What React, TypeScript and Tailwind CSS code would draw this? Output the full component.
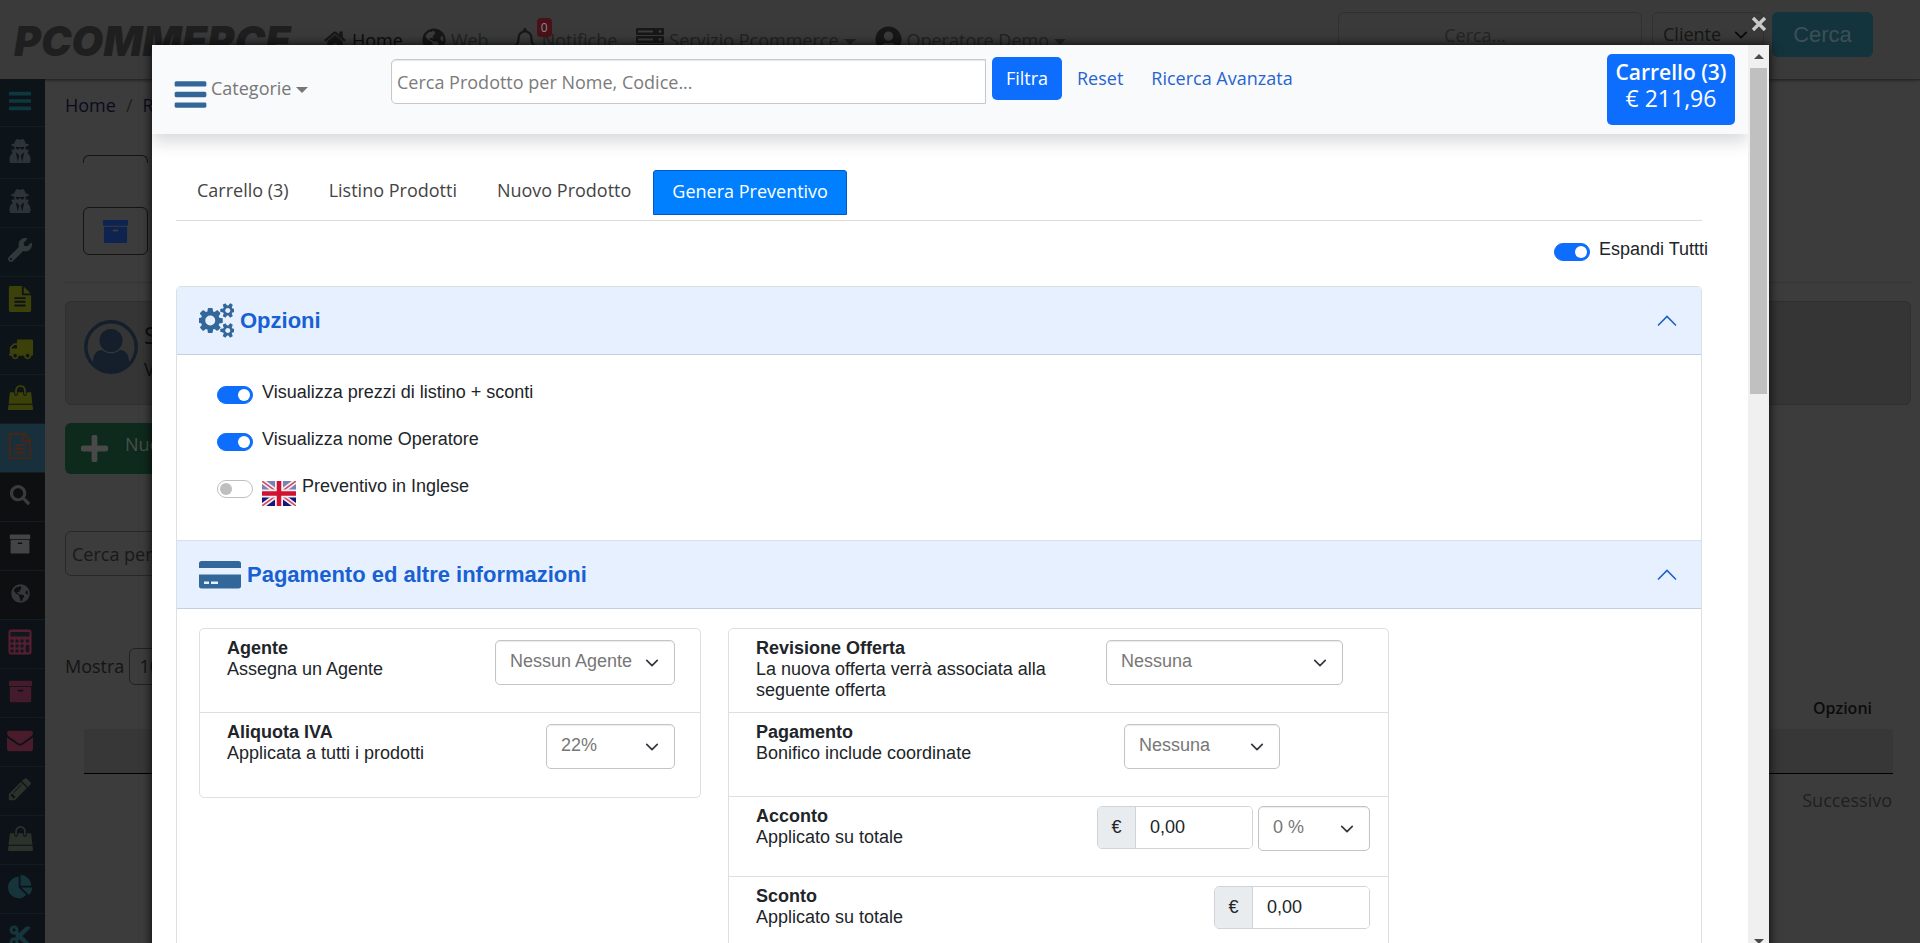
import React, { useState } from 'react';
import type { ReactNode } from 'react';
import { FaCut, FaGlobeAmericas, FaPlus, FaRegBell, FaSearch, FaUserCircle, FaUserSecret, FaWrench } from 'react-icons/fa';

const paths = {
  bars: 'M1664 1344v128q0 26-19 45t-45 19h-1408q-26 0-45-19t-19-45v-128q0-26 19-45t45-19h1408q26 0 45 19t19 45zm0-512v128q0 26-19 45t-45 19h-1408q-26 0-45-19t-19-45v-128q0-26 19-45t45-19h1408q26 0 45 19t19 45zm0-512v128q0 26-19 45t-45 19h-1408q-26 0-45-19t-19-45v-128q0-26 19-45t45-19h1408q26 0 45 19t19 45z',
  home: 'M1472 992v480q0 26-19 45t-45 19h-384v-384h-256v384h-384q-26 0-45-19t-19-45v-480q0-1 .5-3t.5-3l575-474 575 474q1 2 1 6zm223-69l-62 74q-8 9-21 11h-3q-13 0-21-7l-692-577-692 577q-12 8-24 7-13-2-21-11l-62-74q-8-10-7-23.5t11-21.5l719-599q32-26 76-26t76 26l244 204v-195q0-14 9-23t23-9h192q14 0 23 9t9 23v408l219 182q10 8 11 21.5t-7 23.5z',
  cogs: 'M832 896q0-106-75-181t-181-75-181 75-75 181 75 181 181 75 181-75 75-181zm768 512q0-52-38-90t-90-38-90 38-38 90q0 53 37.5 90.5t90.5 37.5 90.5-37.5 37.5-90.5zm0-1024q0-52-38-90t-90-38-90 38-38 90q0 53 37.5 90.5t90.5 37.5 90.5-37.5 37.5-90.5zm-384 421v185q0 10-7 19.5t-16 10.5l-155 24q-11 35-32 76 34 48 90 115 7 11 7 20 0 12-7 19-23 30-82.5 89.5t-78.5 59.5q-11 0-21-7l-115-90q-37 19-77 31-11 108-23 155-7 24-30 24h-186q-11 0-20-7.5t-10-17.5l-23-153q-34-10-75-31l-118 89q-7 7-20 7-11 0-21-8-144-133-144-160 0-9 7-19 10-14 41-53t47-61q-23-44-35-82l-152-24q-10-1-17-9.5t-7-19.5v-185q0-10 7-19.5t16-10.5l155-24q11-35 32-76-34-48-90-115-7-11-7-20 0-12 7-20 22-30 82-89t79-59q11 0 21 7l115 90q34-18 77-32 11-108 23-154 7-24 30-24h186q11 0 20 7.5t10 17.5l23 153q34 10 75 31l118-89q8-7 20-7 11 0 21 8 144 133 144 160 0 8-7 19-12 16-42 54t-45 60q23 48 34 82l152 23q10 2 17 10.5t7 19.5zm640 533v140q0 16-149 31-12 27-30 52 51 113 51 138 0 4-4 7-122 71-124 71-8 0-46-47t-52-68q-20 2-30 2t-30-2q-14 21-52 68t-46 47q-2 0-124-71-4-3-4-7 0-25 51-138-18-25-30-52-149-15-149-31v-140q0-16 149-31 13-29 30-52-51-113-51-138 0-4 4-7 4-2 35-20t59-34 30-16q8 0 46 46.5t52 67.5q20-2 30-2t30 2q51-71 92-112l6-2q4 0 124 70 4 3 4 7 0 25-51 138 17 23 30 52 149 15 149 31zm0-1024v140q0 16-149 31-12 27-30 52 51 113 51 138 0 4-4 7-122 71-124 71-8 0-46-47t-52-68q-20 2-30 2t-30-2q-14 21-52 68t-46 47q-2 0-124-71-4-3-4-7 0-25 51-138-18-25-30-52-149-15-149-31v-140q0-16 149-31 13-29 30-52-51-113-51-138 0-4 4-7 4-2 35-20t59-34 30-16q8 0 46 46.5t52 67.5q20-2 30-2t30 2q51-71 92-112l6-2q4 0 124 70 4 3 4 7 0 25-51 138 17 23 30 52 149 15 149 31z',
  truck: 'M640 1408q0-52-38-90t-90-38-90 38-38 90 38 90 90 38 90-38 38-90zm-384-512h384v-256h-158q-13 0-22 9l-195 195q-9 9-9 22v30zm1280 512q0-52-38-90t-90-38-90 38-38 90 38 90 90 38 90-38 38-90zm256-1088v1024q0 15-4 26.5t-13.5 18.5-16.5 11.5-23.5 6-22.5 2-25.5 0-22.5-.5q0 106-75 181t-181 75-181-75-75-181h-384q0 106-75 181t-181 75-181-75-75-181h-64q-3 0-22.5.5t-25.5 0-22.5-2-23.5-6-16.5-11.5-13.5-18.5-4-26.5q0-26 19-45t45-19v-320q0-8-.5-35t0-38 2.5-34.5 6.5-37 14-30.5 22.5-30l198-198q19-19 50.5-32t58.5-13h160v-192q0-26 19-45t45-19h1024q26 0 45 19t19 45z',
  file: 'M1596 476q14 14 28 36h-472v-472q22 14 36 28zm-476 164h544v1056q0 40-28 68t-68 28h-1344q-40 0-68-28t-28-68v-1600q0-40 28-68t68-28h800v544q0 40 28 68t68 28zm160 736v-64q0-14-9-23t-23-9h-704q-14 0-23 9t-9 23v64q0 14 9 23t23 9h704q14 0 23-9t9-23zm0-256v-64q0-14-9-23t-23-9h-704q-14 0-23 9t-9 23v64q0 14 9 23t23 9h704q14 0 23-9t9-23zm0-256v-64q0-14-9-23t-23-9h-704q-14 0-23 9t-9 23v64q0 14 9 23t23 9h704q14 0 23-9t9-23z',
  fileOutline: 'M1596 380q28 28 48 76t20 88v1152q0 40-28 68t-68 28h-1344q-40 0-68-28t-28-68v-1600q0-40 28-68t68-28h896q40 0 88 20t76 48zm-444-244v376h376q-10-29-22-41l-313-313q-12-12-41-22zm384 1528v-1024h-416q-40 0-68-28t-28-68v-416h-768v1536h1280zm-1024-864q0-14 9-23t23-9h704q14 0 23 9t9 23v64q0 14-9 23t-23 9h-704q-14 0-23-9t-9-23v-64zm736 224q14 0 23 9t9 23v64q0 14-9 23t-23 9h-704q-14 0-23-9t-9-23v-64q0-14 9-23t23-9h704zm0 256q14 0 23 9t9 23v64q0 14-9 23t-23 9h-704q-14 0-23-9t-9-23v-64q0-14 9-23t23-9h704z',
  archive: 'M1088 832q0-26-19-45t-45-19h-256q-26 0-45 19t-19 45 19 45 45 19h256q26 0 45-19t19-45zm576-192v960q0 26-19 45t-45 19h-1408q-26 0-45-19t-19-45v-960q0-26 19-45t45-19h1408q26 0 45 19t19 45zm64-448v256q0 26-19 45t-45 19h-1536q-26 0-45-19t-19-45v-256q0-26 19-45t45-19h1536q26 0 45 19t19 45z',
  bag: 'M1757 1408l35 313q3 28-16 50-19 21-48 21h-1664q-29 0-48-21-19-22-16-50l35-313h1722zm-93-839l86 775h-1708l86-775q3-24 21-40.5t43-16.5h256v128q0 53 37.5 90.5t90.5 37.5 90.5-37.5 37.5-90.5v-128h384v128q0 53 37.5 90.5t90.5 37.5 90.5-37.5 37.5-90.5v-128h256q25 0 43 16.5t21 40.5zm-384-185v256q0 26-19 45t-45 19-45-19-19-45v-256q0-106-75-181t-181-75-181 75-75 181v256q0 26-19 45t-45 19-45-19-19-45v-256q0-159 112.5-271.5t271.5-112.5 271.5 112.5 112.5 271.5z',
  envelope: 'M1792 710v794q0 66-47 113t-113 47h-1472q-66 0-113-47t-47-113v-794q44 49 101 87 362 246 497 345 57 42 92.5 65.5t94.5 48 110 24.5h2q51 0 110-24.5t94.5-48 92.5-65.5q170-123 498-345 57-39 100-87zm0-294q0 79-49 151t-122 123q-376 261-468 325-10 7-42.5 31t-54 38.5-52 32.5-57.5 27-50 9h-2q-23 0-50-9t-57.5-27-52-32.5-54-38.5-42.5-31q-91-64-262-182.5t-205-142.5q-62-42-117-115.5t-55-136.5q0-78 41.5-130t118.5-52h1472q65 0 112.5 47t47.5 113z',
  pencil: 'M491 1536l91-91-235-235-91 91v107h128v128h107zm523-928q0-22-22-22-10 0-17 7l-542 542q-7 7-7 17 0 22 22 22 10 0 17-7l542-542q7-7 7-17zm-54-192l416 416-832 832h-416v-416zm683 96q0 53-37 90l-166 166-416-416 166-165q36-38 90-38 53 0 91 38l235 234q37 39 37 91z',
  pie: 'M768 890l546 546q-106 108-247.5 168t-298.5 60q-209 0-385.5-103t-279.5-279.5-103-385.5 103-385.5 279.5-279.5 385.5-103v762zm187 6h773q0 157-60 298.5t-168 247.5zm709-128h-768v-768q209 0 385.5 103t279.5 279.5 103 385.5z',
};

function Glyph({ name, className }: { name: keyof typeof paths; className: string }) {
  return (
    <svg viewBox="0 0 1792 1792" fill="currentColor" aria-hidden="true" className={className}>
      <path d={paths[name]} />
    </svg>
  );
}

function Calculator() {
  const dots = [6, 11, 16].flatMap((y) => [4, 9, 14].map((x) => [x, y + 6]));
  return (
    <svg viewBox="0 0 24 26" className="h-[26px] w-6" aria-hidden="true">
      <rect x="1" y="1" width="22" height="24" rx="1.5" fill="#511f2f" stroke="#611f33" strokeWidth="1" />
      <rect x="2.5" y="3" width="19" height="4.5" fill="#10171d" />
      {dots.map(([x, y]) => (
        <circle key={`${x}-${y}`} cx={x} cy={y} r="1.7" fill="#10171d" />
      ))}
      <circle cx="19.5" cy="12" r="1.7" fill="#10171d" />
      <rect x="17.8" y="15.5" width="3.4" height="8" rx="1.7" fill="#10171d" />
    </svg>
  );
}

function Server() {
  return (
    <svg viewBox="0 0 28 24" className="h-6 w-7" aria-hidden="true">
      {[0, 8, 16].map((y) => (
        <g key={y}>
          <rect x="0" y={y} width="28" height="7" rx="1" fill="#171717" />
          <rect x="2" y={y + 2.5} width="15" height="2" fill="#3c3c3c" />
          <circle cx="24" cy={y + 3.5} r="1.4" fill="#3c3c3c" />
        </g>
      ))}
    </svg>
  );
}

function Avatar() {
  return (
    <svg viewBox="0 0 54 54" className="size-[54px]" aria-hidden="true">
      <circle cx="27" cy="27" r="25.2" fill="none" stroke="#141f2b" strokeWidth="3.4" />
      <circle cx="27" cy="20.5" r="11.5" fill="#141f2b" />
      <path d="M9 42c0-8 4-12 9-12 3 2 5.500 3.500 9 3.500s6-1.500 9-3.500c5 0 9 4 9 12-4 6-10 10-18 10S13 48 9 42z" fill="#141f2b" />
    </svg>
  );
}

function Flag() {
  return (
    <svg viewBox="0 0 34 25" className="h-[25px] w-[34px]" aria-hidden="true">
      <rect width="34" height="25" fill="#15157a" />
      <rect width="34" height="9" fill="#7a80b8" />
      <path d="M0 0 34 25M34 0 0 25" stroke="#f3eef3" strokeWidth="5" />
      <path d="M0 0 34 25M34 0 0 25" stroke="#d04a5c" strokeWidth="1.500" />
      <path d="M17 0v25M0 12.500h34" stroke="#f3eef3" strokeWidth="8" />
      <path d="M17 0v25M0 12.500h34" stroke="#cf1230" strokeWidth="4.500" />
    </svg>
  );
}

function CreditCard() {
  return (
    <svg viewBox="0 0 42 28" className="h-7 w-[42px]" fill="#346799" aria-hidden="true">
      <path d="M2.500 0h37A2.500 2.500 0 0 1 42 2.500V7H0V2.500A2.500 2.500 0 0 1 2.500 0z" />
      <path fillRule="evenodd" d="M0 13.500h42v11.500a2.500 2.500 0 0 1-2.500 2.500h-37A2.500 2.500 0 0 1 0 25zM5 20.500v2.500h5v-2.500zM12 20.500v2.500h7v-2.500z" />
    </svg>
  );
}

function Chevron({ className }: { className: string }) {
  return (
    <svg viewBox="0 0 16 16" fill="none" stroke="currentColor" strokeLinecap="round" strokeLinejoin="round" aria-hidden="true" className={className}>
      <path d="m2 5 6 6 6-6" strokeWidth="2" />
    </svg>
  );
}

function Caret() {
  return <span className="ml-[5px] inline-block border-x-[6px] border-t-[6px] border-x-transparent border-t-current align-middle" />;
}

const sideItems: { label: string; icon: ReactNode; tone: string }[] = [
  { label: 'Menu', icon: <Glyph name="bars" className="size-[26px] text-[#0e383f]" />, tone: 'h-12 bg-[#0c1319]' },
  { label: 'Agenti', icon: <FaUserSecret className="size-6 text-[#2e3338]" />, tone: 'h-[52px] bg-[#0c1319]' },
  { label: 'Operatori', icon: <FaUserSecret className="size-6 text-[#2e3338]" />, tone: 'h-[49px] bg-[#0c1319]' },
  { label: 'Strumenti', icon: <FaWrench className="size-6 -scale-x-100 rotate-90 text-[#33383b]" />, tone: 'h-[49px] bg-[#0c1319]' },
  { label: 'Fatture', icon: <Glyph name="file" className="size-[26px] text-[#3c4009]" />, tone: 'h-[49px] bg-[#0c1319]' },
  { label: 'Spedizioni', icon: <Glyph name="truck" className="size-[25px] text-[#3c4009]" />, tone: 'h-[49px] bg-[#0c1319]' },
  { label: 'Ordini', icon: <Glyph name="bag" className="size-[25px] text-[#3c4009]" />, tone: 'h-[49px] bg-[#0c1319]' },
  { label: 'Preventivi', icon: <Glyph name="fileOutline" className="size-[26px] text-[#4b2415]" />, tone: 'h-[49px] bg-[#18303b]' },
  { label: 'Cerca', icon: <FaSearch className="size-5 text-[#3b3b3d]" />, tone: 'h-[49px] bg-[#0d0f11]' },
  { label: 'Archivio', icon: <Glyph name="archive" className="size-[22px] text-[#444]" />, tone: 'h-[49px] bg-[#0d0f11]' },
  { label: 'Sito', icon: <FaGlobeAmericas className="size-[19px] text-[#34363a]" />, tone: 'h-[49px] bg-[#0d0f11]' },
  { label: 'Calcolatrice', icon: <Calculator />, tone: 'h-[49px] bg-[#0c1217]' },
  { label: 'Magazzino', icon: <Glyph name="archive" className="size-[25px] text-[#431b2a]" />, tone: 'h-[49px] bg-[#0c1217]' },
  { label: 'Messaggi', icon: <Glyph name="envelope" className="size-[26px] text-[#4a1b2a]" />, tone: 'h-[49px] bg-[#0c1217]' },
  { label: 'Modifica', icon: <Glyph name="pencil" className="size-[26px] text-[#2b322b]" />, tone: 'h-[49px] bg-[#0c1217]' },
  { label: 'Acquisti', icon: <Glyph name="bag" className="size-[25px] text-[#2b322b]" />, tone: 'h-[49px] bg-[#0c1217]' },
  { label: 'Statistiche', icon: <Glyph name="pie" className="size-[25px] text-[#15343b]" />, tone: 'h-[49px] bg-[#0c1217]' },
  { label: 'Taglia', icon: <FaCut className="size-6 text-[#15343b]" />, tone: 'h-[49px] bg-[#0c1217]' },
];

function NavLink({ icon, children, tone }: { icon: ReactNode; children: ReactNode; tone: string }) {
  return (
    <a href="#" className={`flex items-center gap-[5px] whitespace-nowrap ${tone}`}>
      <span className="text-[#171717]">{icon}</span>
      <span>{children}</span>
    </a>
  );
}

function TopBar() {
  return (
    <header className="flex h-[79px] items-start bg-[#3a3a3a] pl-[14px] shadow-[0_1px_3px_#1c1c1c]">
      <a href="#" className="mt-[22px] w-[309px] shrink-0 font-['Inter'] text-[41px] leading-[38px] font-black text-[#1f1f1f] italic">
        PCOMMERCE
      </a>
      <nav className="mt-[26px] flex items-center gap-[19px] leading-6">
        <NavLink icon={<Glyph name="home" className="size-6" />} tone="text-[#0c0c0c]">Home</NavLink>
        <NavLink icon={<FaGlobeAmericas className="size-6" />} tone="text-[#222]">Web</NavLink>
        <span className="relative ml-[5px]">
          <NavLink icon={<FaRegBell className="size-6" />} tone="text-[#222]">Notifiche</NavLink>
          <span className="absolute -top-[10px] left-6 rounded-sm bg-[#4a1118] px-1 text-[12px] leading-[19px] text-[#8a8a8a]">0</span>
        </span>
        <NavLink icon={<Server />} tone="text-[#222]">Servizio Pcommerce<Caret /></NavLink>
        <NavLink icon={<FaUserCircle className="size-[27px]" />} tone="text-[#222]">Operatore Demo<Caret /></NavLink>
      </nav>
      <form className="mt-3 mr-[47px] ml-auto flex gap-2">
        <input aria-label="Cerca nel gestionale" placeholder="Cerca..." className="h-[45px] w-[304px] rounded-md border border-[#303030] bg-transparent pr-[30px] text-center placeholder:text-[#252525]" />
        <span className="relative ml-[2px] block">
          <select aria-label="Tipo di ricerca" className="h-[45px] w-[112px] appearance-none rounded-md border border-[#303030] bg-transparent pl-[10px] text-[#161616]">
            <option>Cliente</option>
          </select>
          <Chevron className="pointer-events-none absolute top-4 right-4 size-[14px] text-[#0a0a0a]" />
        </span>
        <button type="button" className="h-[45px] w-[101px] rounded-md bg-[#13333d] font-['Liberation_Sans'] text-[22px] text-[#3d4f55]">Cerca</button>
      </form>
    </header>
  );
}

function BackPage() {
  return (
    <div className="flex h-full flex-col bg-[#3c3c3c]">
      <TopBar />
      <div className="flex min-h-0 flex-1">
        <aside className="w-[45px] shrink-0 overflow-hidden">
          {sideItems.map((item) => (
            <a key={item.label} href="#" aria-label={item.label} className={`flex items-center justify-center border-b border-[#141b21] pr-[5px] pb-[4px] ${item.tone}`}>
              {item.icon}
            </a>
          ))}
        </aside>
        <main className="min-w-0 flex-1 pl-5">
          <p className="flex h-[76px] gap-[10px] pt-[13px] leading-[26px] text-[#0b0b1c]">
            <a href="#">Home</a>
            <span className="text-[#1e1e1e]">/</span>
            <a href="#">Rubrica</a>
          </p>
          <div className="ml-[18px] h-2 w-[65px] rounded-t-md border border-b-0 border-[#141414]" />
          <button type="button" aria-label="Archivia" className="mt-[44px] ml-[18px] flex h-12 w-[65px] items-center justify-center rounded-md border border-[#141414]">
            <Glyph name="archive" className="size-[27px] text-[#0e2350]" />
          </button>
          <hr className="mt-[27px] mr-2 border-[#353535]" />
          <section className="mt-[18px] mr-[9px] flex h-[104px] items-center gap-[6px] rounded-md border border-[#2f2f2f] bg-[#353535] pb-3 pl-[18px]">
            <Avatar />
            <div className="text-[#0e0e0e]">
              <h2 className="pt-1 text-[24px] leading-9">Spett.le</h2>
              <p className="pt-1 leading-6">Via</p>
            </div>
          </section>
          <button type="button" className="mt-[18px] flex h-[51px] w-[240px] items-center gap-[15px] rounded-md bg-[#0e2a1d] pl-[14px] text-[#4a4f4c]">
            <FaPlus className="size-[31px] text-[#494949]" />
            <span className="pb-2">Nuovo Preventivo</span>
          </button>
          <input aria-label="Cerca preventivo" placeholder="Cerca per nome" className="mt-[57px] block h-[45px] w-[400px] rounded-md border border-[#282828] bg-transparent px-[6px] placeholder:text-[#191919]" />
          <label className="mt-[72px] flex h-[37px] items-center gap-[5px] text-[#141414]">
            Mostra
            <select className="h-[37px] w-20 appearance-none rounded-md border border-[#222] bg-transparent px-[9px]">
              <option>10</option>
            </select>
          </label>
          <table className="mt-[10px] ml-[19px] w-[calc(100%-46px)] text-[16px] text-[#0c0c0c]">
            <thead>
              <tr className="h-[34px]"><th className="pr-[21px] pb-[9px] text-right font-semibold">Opzioni</th></tr>
            </thead>
            <tbody>
              <tr className="h-11 border-b border-black bg-[#373737]"><td /></tr>
            </tbody>
          </table>
          <p className="mt-[13px] mr-[28px] text-right leading-[26px]"><a href="#" className="text-[#1f1f1f]">Successivo</a></p>
        </main>
      </div>
    </div>
  );
}

function Toggle({ id, on = false, children, flag = false }: { id: string; on?: boolean; children: ReactNode; flag?: boolean }) {
  return (
    <div className="flex h-[27px] gap-[9px] font-['Liberation_Sans'] text-[#212529]">
      <input
        id={id}
        type="checkbox"
        role="switch"
        defaultChecked={on}
        className="mt-[7px] h-[18px] w-9 shrink-0 appearance-none rounded-full border border-[#bfbfbf] bg-white before:m-[2px] before:block before:size-3 before:rounded-full before:bg-[#bfbfbf] before:content-[''] checked:border-[#0d6efd] checked:bg-[#0d6efd] checked:before:ml-5 checked:before:bg-white"
      />
      <label htmlFor={id} className="flex gap-[6px] leading-[27px]">
        {flag && <span className="pt-2"><Flag /></span>}
        {children}
      </label>
    </div>
  );
}

function Select({ id, value, width, label }: { id: string; value: string; width: string; label?: string }) {
  return (
    <span className={`relative block ${width}`}>
      <select id={id} aria-label={label} className="h-[45px] w-full appearance-none rounded-[5px] border border-[#c4c4c4] bg-white pr-9 pb-[3px] pl-[14px] text-[#777] shadow-[inset_0_1px_1px_rgba(0,0,0,0.08)]">
        <option>{value}</option>
      </select>
      <Chevron className="pointer-events-none absolute top-4 right-4 size-[14px] text-[#343a40]" />
    </span>
  );
}

function Money({ id }: { id: string }) {
  return (
    <span className="flex h-[43px] w-[156px] overflow-hidden rounded-[5px] border border-[#ced4da]">
      <span className="flex w-[38px] shrink-0 items-center justify-center border-r border-[#ced4da] bg-[#e9ecef] text-[#212529]">€</span>
      <input id={id} defaultValue="0,00" className="w-full min-w-0 bg-white px-[14px] text-[#212529]" />
    </span>
  );
}

function Row({ id, title, note, height, children, pad }: { id: string; title: string; note: string; height: string; pad: string; children: ReactNode }) {
  return (
    <div className={`flex justify-between border-b border-[#dfdfdf] pt-[9px] pl-[27px] last:border-b-0 ${height} ${pad}`}>
      <label htmlFor={id} className="w-[300px] leading-[21px]">
        <strong className="block">{title}</strong>
        {note}
      </label>
      {children}
    </div>
  );
}

function Panel({ id, icon, title, children }: { id: string; icon: ReactNode; title: string; children: ReactNode }) {
  const [open, setOpen] = useState(true);
  return (
    <section className="border border-b-0 border-[#dcdfe4] first:rounded-t-[5px]">
      <h2>
        <button
          type="button"
          aria-expanded={open}
          aria-controls={id}
          onClick={() => setOpen(!open)}
          className="flex h-[68px] w-full items-center gap-[6px] border-b border-[#c6cfdf] bg-[#e7f0ff] pr-[24px] pl-[22px] font-['Liberation_Sans'] text-[22px] font-bold text-[#1761d2]"
        >
          {icon}
          {title}
          <svg viewBox="0 0 20 12" className="ml-auto h-3 w-5" fill="none" stroke="#1d62c8" strokeWidth="1.6" aria-hidden="true">
            <path d="m1 10.500 9-9 9 9" />
          </svg>
        </button>
      </h2>
      {open && <div id={id}>{children}</div>}
    </section>
  );
}

function Quote() {
  return (
    <div className="mt-[23px] mr-[46px] ml-6">
      <Panel id="opzioni" title="Opzioni" icon={<Glyph name="cogs" className="size-[35px] text-[#346799]" />}>
        <div className="flex h-[185px] flex-col gap-5 pt-6 pl-10">
          <Toggle id="listino" on>Visualizza prezzi di listino + sconti</Toggle>
          <Toggle id="operatore" on>Visualizza nome Operatore</Toggle>
          <Toggle id="inglese" flag>Preventivo in Inglese</Toggle>
        </div>
      </Panel>
      <Panel id="pagamento" title="Pagamento ed altre informazioni" icon={<CreditCard />}>
        <div className="flex items-start gap-[27px] px-[22px] pt-[19px] pb-10 font-['Liberation_Sans'] text-[#212529]">
          <div className="w-[502px] rounded-[5px] border border-[#dfdfdf]">
            <Row id="agente" title="Agente" note="Assegna un Agente" height="h-[84px]" pad="pr-[25px]">
              <span className="pt-[2px]"><Select id="agente" value="Nessun Agente" width="w-[180px]" /></span>
            </Row>
            <Row id="iva" title="Aliquota IVA" note="Applicata a tutti i prodotti" height="h-[84px]" pad="pr-[25px]">
              <span className="pt-[2px]"><Select id="iva" value="22%" width="w-[129px]" /></span>
            </Row>
          </div>
          <div className="w-[661px] rounded-[5px] border border-[#dfdfdf]">
            <Row id="revisione" title="Revisione Offerta" note="La nuova offerta verrà associata alla seguente offerta" height="h-[84px]" pad="pr-[45px]">
              <span className="pt-[2px]"><Select id="revisione" value="Nessuna" width="w-[237px]" /></span>
            </Row>
            <Row id="metodo" title="Pagamento" note="Bonifico include coordinate" height="h-[84px]" pad="pr-[108px]">
              <span className="pt-[2px]"><Select id="metodo" value="Nessuna" width="w-[156px]" /></span>
            </Row>
            <Row id="acconto" title="Acconto" note="Applicato su totale" height="h-20" pad="pr-[18px]">
              <span className="flex gap-[5px]">
                <Money id="acconto" />
                <Select id="acconto-percento" label="Percentuale acconto" value="0 %" width="w-[112px]" />
              </span>
            </Row>
            <Row id="sconto" title="Sconto" note="Applicato su totale" height="h-20" pad="pr-[18px]">
              <Money id="sconto" />
            </Row>
          </div>
        </div>
      </Panel>
    </div>
  );
}

function Tabs() {
  const tabs = ['Carrello (3)', 'Listino Prodotti', 'Nuovo Prodotto', 'Genera Preventivo'];
  const [active, setActive] = useState(3);
  return (
    <div role="tablist" className="mt-[36px] mr-[46px] ml-6 flex h-[51px] border-b border-[#dcdcdc] pl-px">
      {tabs.map((tab, i) => (
        <button
          key={tab}
          type="button"
          role="tab"
          aria-selected={i === active}
          onClick={() => setActive(i)}
          className={
            i === active
              ? 'ml-[2px] h-[45px] rounded-t-[3px] border border-[#0059c9] bg-[#007fff] px-[18px] pb-[2px] font-medium text-white'
              : 'h-[45px] border border-transparent px-[19px] pb-[4px] text-[#444]'
          }
        >
          {tab}
        </button>
      ))}
    </div>
  );
}

function ModalHeader() {
  return (
    <div className="relative flex h-[89px] shrink-0 items-start bg-[#f8fafc] pr-[13px] pl-[20px] shadow-[0_8px_16px_rgba(0,0,0,0.15)]">
      <button type="button" className="mt-[30px] flex w-[219px] items-center gap-[2px] text-[#777]">
        <Glyph name="bars" className="size-[37px] text-[#346799]" />
        <span className="pb-[11px]">Categorie<Caret /></span>
      </button>
      <form className="mt-[12px] flex items-start gap-[6px]">
        <input aria-label="Cerca prodotto" placeholder="Cerca Prodotto per Nome, Codice..." className="mt-[2px] h-[45px] w-[595px] rounded-l-[5px] border border-[#c8c8c8] bg-white px-[5px] shadow-[inset_0_1px_1px_rgba(0,0,0,0.1)] placeholder:text-[#7b7b7b]" />
        <button type="button" className="h-[43px] w-[70px] rounded-[5px] bg-[#0d6efd] font-medium text-white">Filtra</button>
        <a href="#" className="ml-[9px] leading-[42px] text-[#2864cd]">Reset</a>
        <a href="#" className="ml-[22px] leading-[42px] text-[#2864cd]">Ricerca Avanzata</a>
      </form>
      <button type="button" className="mt-[9px] ml-auto h-[71px] w-[128px] rounded-[5px] bg-[#0d6efd] pb-[10px] text-[23px] leading-[26px] whitespace-nowrap text-white">
        <strong className="block text-[21px] leading-[26px] font-semibold">Carrello (3)</strong>
        € 211,96
      </button>
    </div>
  );
}

function ScrollRail() {
  return (
    <div className="flex w-[21px] shrink-0 flex-col items-center bg-[#f0f0f0]" aria-hidden="true">
      <span className="mt-[9px] border-x-[5px] border-b-[5px] border-x-transparent border-b-[#4a4a4a]" />
      <span className="mt-[9px] h-[36%] w-[17px] bg-[#c0c0c0]" />
      <span className="mt-auto mb-[7px] border-x-[5px] border-t-[5px] border-x-transparent border-t-[#4a4a4a]" />
    </div>
  );
}

export default function App() {
  return (
    <div className="relative h-screen overflow-hidden font-['Open_Sans',sans-serif] text-[18px]">
      <BackPage />
      <div className="absolute inset-0 flex overflow-hidden pt-[45px] pr-[151px] pl-[152px]">
        <div role="dialog" aria-modal="true" aria-label="Genera Preventivo" className="relative -mb-2 flex min-w-0 flex-1 bg-white shadow-[0_0_10px_rgba(0,0,0,0.9)]">
          <button type="button" aria-label="Chiudi" className="absolute -top-[29px] right-[2px] size-4 text-[#c9c9c9]">
            <svg viewBox="0 0 16 16" fill="none" stroke="currentColor" strokeWidth="3.4" aria-hidden="true"><path d="m2 2 12 12M14 2 2 14" /></svg>
          </button>
          <div className="flex min-w-0 flex-1 flex-col overflow-hidden">
            <ModalHeader />
            <div className="min-h-0 flex-1 overflow-hidden">
              <Tabs />
              <div className="mt-[15px] mr-10 flex justify-end">
                <Toggle id="espandi" on>Espandi Tuttti</Toggle>
              </div>
              <Quote />
            </div>
          </div>
          <ScrollRail />
        </div>
      </div>
    </div>
  );
}
